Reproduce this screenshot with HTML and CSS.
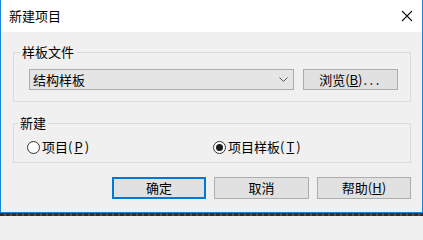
FILE: index.html
```html
<!DOCTYPE html>
<html lang="zh-CN">
<head>
<meta charset="utf-8">
<title>新建项目</title>
<link rel="stylesheet" href="styles.css">
</head>
<body>
<div class="window">
  <div class="titlebar">
    <span class="title">新建项目</span>
    <svg class="close" width="12" height="12" viewBox="0 0 12 12" aria-hidden="true">
      <path d="M1 1 L11 11 M11 1 L1 11" stroke="#111" stroke-width="1.1" fill="none"/>
    </svg>
  </div>
  <div class="content">
    <fieldset class="group group-template">
      <legend>样板文件</legend>
      <div class="template-row">
        <div class="combo">
          <span class="combo-text">结构样板</span>
          <svg class="chevron" width="9" height="5" viewBox="0 0 9 5" aria-hidden="true">
            <path d="M0.5 0.5 L4.5 4.5 L8.5 0.5" stroke="#555" stroke-width="1" fill="none"/>
          </svg>
        </div>
        <button class="btn browse">浏览(<u>B</u>)<span class="dots">...</span></button>
      </div>
    </fieldset>
    <fieldset class="group group-new">
      <legend>新建</legend>
      <div class="radio-row">
        <label class="radio"><span class="dot"></span>项目(<u>P</u>)</label>
        <label class="radio checked"><span class="dot"></span>项目样板(<u>T</u>)</label>
      </div>
    </fieldset>
    <div class="actions">
      <button class="btn default">确定</button>
      <button class="btn cancel">取消</button>
      <button class="btn">帮助(<u>H</u>)</button>
    </div>
  </div>
</div>
<div class="strip"></div>
</body>
</html>
```
FILE: styles.css
```css
html, body {
  margin: 0;
  padding: 0;
  width: 423px;
  height: 216px;
  overflow: hidden;
  background: #f0f0f0;
  font-family: "Noto Sans CJK SC", "Noto Sans", sans-serif;
  font-size: 13px;
  color: #000;
}

.window {
  box-sizing: border-box;
  width: 423px;
  height: 213px;
  border-left: 1px solid #1a86d9;
  border-right: 1px solid #1a86d9;
  border-bottom: 1px solid #1a86d9;
  background: #f0f0f0;
  display: flex;
  flex-direction: column;
}

.titlebar {
  height: 32px;
  background: #fff;
  display: flex;
  align-items: center;
  justify-content: space-between;
  padding: 0 9px 0 8px;
  flex: none;
}

.title {
  line-height: 16px;
}

.close {
  display: block;
}

.content {
  padding: 12px 11px 0 12px;
}

.group {
  margin: 0;
  border: 1px solid #dcdcdc;
  min-inline-size: 0;
}

.group legend {
  line-height: 16px;
  padding: 0 2px;
  margin-left: -9px;
}

.group-template {
  padding: 9px 12px 11px 15px;
}

.template-row {
  display: flex;
  gap: 9px;
  height: 21px;
}

.combo {
  flex: 1;
  box-sizing: border-box;
  height: 21px;
  border: 1px solid #adadad;
  background: #e5e5e5;
  display: flex;
  align-items: center;
  justify-content: space-between;
  padding: 0 5px 0 3px;
}

.combo-text {
  line-height: 16px;
}

.chevron {
  display: block;
}

.btn {
  box-sizing: border-box;
  font: inherit;
  color: #000;
  background: #e1e1e1;
  border: 1px solid #adadad;
  padding: 0;
  height: 22px;
  width: 94px;
  line-height: 18px;
  text-align: center;
}

.browse {
  width: 95px;
  height: 21px;
}

.dots {
  letter-spacing: 2.5px;
  margin-left: 1px;
}

.group-new {
  margin-top: 13px;
  padding: 8px 12px 7px 13px;
}

.radio-row {
  display: grid;
  grid-template-columns: 186px 1fr;
  height: 16px;
}

.radio {
  display: flex;
  align-items: center;
  gap: 2px;
  line-height: 16px;
}

.dot {
  box-sizing: border-box;
  width: 13px;
  height: 13px;
  border: 1px solid #333;
  border-radius: 50%;
  background: #fff;
  display: flex;
  align-items: center;
  justify-content: center;
}

.checked .dot::after {
  content: "";
  width: 7px;
  height: 7px;
  border-radius: 50%;
  background: #1a1a1a;
}

.actions {
  margin-top: 14px;
  display: flex;
  justify-content: flex-end;
  gap: 8px;
}

.default {
  border-color: #0078d7;
  box-shadow: inset 0 0 0 1px #0078d7;
}

.cancel {
  width: 95px;
}

.strip {
  height: 3px;
  background: repeating-linear-gradient(90deg, #2c3036 0 4px, #4a5058 4px 6px);
}
```
